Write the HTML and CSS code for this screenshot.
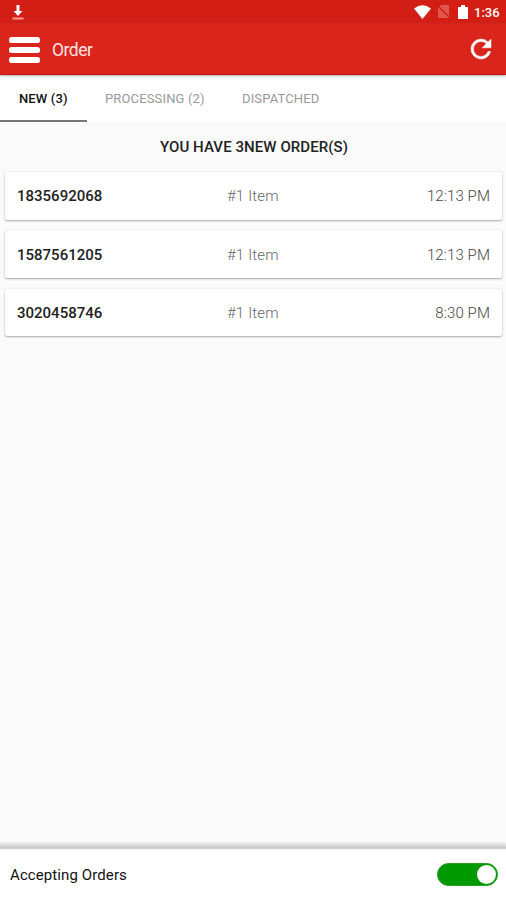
FILE: index.html
```html
<!DOCTYPE html>
<html lang="en">
<head>
<meta charset="utf-8">
<title>Order</title>
<link rel="stylesheet" href="styles.css">
</head>
<body>
<div class="app">
  <div class="status">
    <svg class="download" width="12" height="16" viewBox="0 0 12 16"><path d="M4.500 0h3v6h3L6 11 1.500 6h3z" fill="#fff"/><path d="M.5 13.500h11" stroke="#ff9c94" stroke-width="2"/></svg>
    <svg class="wifi" width="17" height="14" viewBox="0 0 17 14"><path d="M0 3.500Q8.500-3 17 3.500L8.500 14z" fill="#fff"/></svg>
    <svg class="sim" width="11" height="13" viewBox="0 0 11 13"><path d="M3 0h8v13H0V3z" fill="#e0564d"/><path d="M0 1l11 11" stroke="#d21e14" stroke-width="1.300"/></svg>
    <svg class="battery" width="10" height="14" viewBox="0 0 10 14"><path d="M3 0h4v2h3v12H0V2h3z" fill="#fff"/></svg>
    <span class="clock">1:36</span>
  </div>
  <header class="bar">
    <svg class="menu" width="31" height="26" viewBox="0 0 31 26" fill="#fff"><rect width="31" height="6" rx="2.500"/><rect y="10" width="31" height="6" rx="2.500"/><rect y="20" width="31" height="6" rx="2.500"/></svg>
    <h1 class="title">Order</h1>
    <svg class="refresh" width="30" height="30" viewBox="0 0 24 24"><path d="M17.650 6.350A7.958 7.958 0 0 0 12 4a8 8 0 1 0 7.730 10h-2.080A6 6 0 1 1 12 6c1.660 0 3.140.69 4.220 1.780L13 11h7V4z" fill="#fff" stroke="#fff" stroke-width=".4"/></svg>
  </header>
  <nav class="tabs">
    <span class="tab active">NEW (3)</span>
    <span class="tab processing">PROCESSING (2)</span>
    <span class="tab dispatched">DISPATCHED</span>
  </nav>
  <main class="content">
    <h2 class="heading">YOU HAVE 3NEW ORDER(S)</h2>
    <div class="orders">
      <div class="order"><span class="number">1835692068</span><span class="items">#1 Item</span><span class="time">12:13 PM</span></div>
      <div class="order"><span class="number">1587561205</span><span class="items">#1 Item</span><span class="time">12:13 PM</span></div>
      <div class="order"><span class="number">3020458746</span><span class="items">#1 Item</span><span class="time">8:30 PM</span></div>
    </div>
  </main>
  <footer class="footer">
    <span class="accepting">Accepting Orders</span>
    <span class="switch"><span class="knob"></span></span>
  </footer>
</div>
</body>
</html>
```
FILE: styles.css
```css
* { box-sizing: border-box; }
body { margin: 0; font-family: Roboto, "Liberation Sans", sans-serif; }
h1, h2 { margin: 0; }
.app { display: flex; flex-direction: column; width: 506px; height: 900px; background: #fafafa; overflow: hidden; }
.status { display: flex; align-items: center; height: 24px; flex: none; background: #d21e14; color: #fff; padding: 1px 6px 0 12px; }
.download { margin-top: 1px; }
.wifi { margin: 0 7px 0 auto; }
.wifi, .sim, .battery { position: relative; top: -1px; }
.battery { margin: 0 6px 0 9px; }
.clock { width: 26px; font-size: 13px; font-weight: 500; white-space: nowrap; }
.bar { display: flex; align-items: center; height: 51px; flex: none; background: #da251c; padding: 0 10px 0 9px; border-bottom: 1px solid #cf160d; box-shadow: 0 1px 2px #aaa; z-index: 1; }
.menu { margin-top: 1px; }
.title { margin: 2px auto 0 12px; color: #ffe3e0; font-size: 17.500px; font-weight: 400; letter-spacing: -.5px; }
.tabs { display: flex; height: 47px; flex: none; background: #fff; font-size: 13px; line-height: 48px; letter-spacing: .15px; color: #999; }
.tab { white-space: nowrap; }
.active { width: 87px; padding-left: 19px; color: #111; font-weight: 500; border-bottom: 2px solid #777; }
.processing { width: 137px; padding-left: 18px; }
.dispatched { padding-left: 18px; }
.content { flex: 1; }
.heading { height: 50px; padding-left: 2px; text-align: center; font-size: 15px; line-height: 50px; font-weight: 500; letter-spacing: .07px; color: #222; }
.orders { display: flex; flex-direction: column; gap: 10.500px; padding: 0 4px 0 5px; }
.order { display: grid; grid-template-columns: 210px 1fr auto; align-items: center; height: 47.800px; padding: 1px 12px 0; background: #fff; border-radius: 2px; box-shadow: 0 1px 2px #aaa, 0 0 1px #ccc; font-size: 15px; color: #666; }
.number { color: #222; font-weight: 500; }
.items { font-weight: 300; letter-spacing: .15px; }
.time { font-weight: 300; letter-spacing: .1px; color: #444; }
.footer { display: flex; align-items: center; justify-content: space-between; flex: none; height: 58px; padding: 2px 8px 0 10px; background: linear-gradient(#f3f3f3, #c6c6c6 6px, #e3e3e3 7px, #fff 8px); }
.accepting { margin-top: 6px; font-size: 15px; color: #111; letter-spacing: .1px; }
.switch { display: flex; align-items: center; justify-content: flex-end; width: 61px; height: 23px; margin-top: 4px; padding-right: 1.500px; border: 1px solid #299b29; border-radius: 12px; background: #009900; }
.knob { width: 19px; height: 19px; border-radius: 50%; background: #fff; }
```
